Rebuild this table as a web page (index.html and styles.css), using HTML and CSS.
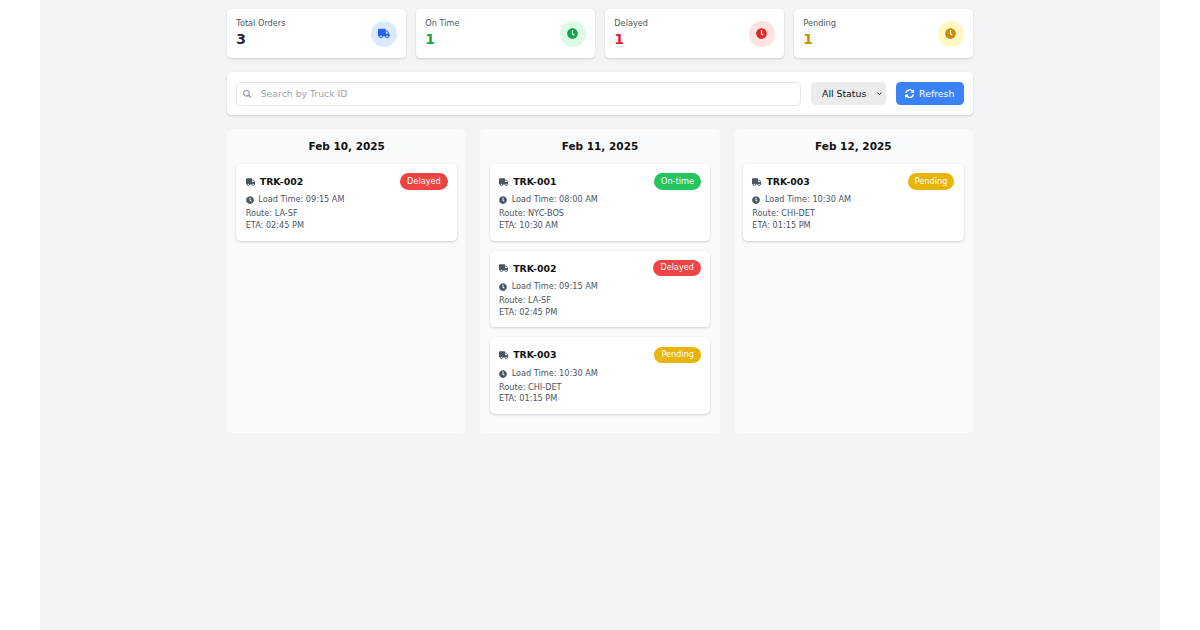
FILE: index.html
```html
<!DOCTYPE html>
<html lang="en">
<head>
<meta charset="utf-8">
<title>Truck Schedule</title>
<link rel="stylesheet" href="styles.css">
</head>
<body>
<div class="page">
  <div class="container">
    <div class="stats">
      <div class="stat">
        <div>
          <div class="stat-label">Total Orders</div>
          <div class="stat-value v-gray">3</div>
        </div>
        <div class="stat-icon i-blue">
          <svg viewBox="0 0 640 512"><path d="M624 352h-16V243.9c0-12.7-5.1-24.9-14.1-33.9L494 110.1c-9-9-21.2-14.1-33.9-14.1H416V48c0-26.5-21.5-48-48-48H48C21.5 0 0 21.5 0 48v320c0 26.5 21.5 48 48 48h16c0 53 43 96 96 96s96-43 96-96h128c0 53 43 96 96 96s96-43 96-96h48c8.8 0 16-7.2 16-16v-32c0-8.8-7.2-16-16-16zM160 464c-26.5 0-48-21.5-48-48s21.5-48 48-48 48 21.5 48 48-21.5 48-48 48zm320 0c-26.5 0-48-21.5-48-48s21.5-48 48-48 48 21.5 48 48-21.5 48-48 48zm80-208H416V144h44.1l99.9 99.9V256z"/></svg>
        </div>
      </div>
      <div class="stat">
        <div>
          <div class="stat-label">On Time</div>
          <div class="stat-value v-green">1</div>
        </div>
        <div class="stat-icon i-green">
          <svg viewBox="0 0 512 512"><path d="M256,8C119,8,8,119,8,256S119,504,256,504,504,393,504,256,393,8,256,8Zm92.49,313h0l-20,25a16,16,0,0,1-22.49,2.5h0l-67-49.72a40,40,0,0,1-15-31.230V112a16,16,0,0,1,16-16h32a16,16,0,0,1,16,16V256l58,42.5A16,16,0,0,1,348.49,321Z"/></svg>
        </div>
      </div>
      <div class="stat">
        <div>
          <div class="stat-label">Delayed</div>
          <div class="stat-value v-red">1</div>
        </div>
        <div class="stat-icon i-red">
          <svg viewBox="0 0 512 512"><path d="M256,8C119,8,8,119,8,256S119,504,256,504,504,393,504,256,393,8,256,8Zm92.49,313h0l-20,25a16,16,0,0,1-22.49,2.5h0l-67-49.72a40,40,0,0,1-15-31.230V112a16,16,0,0,1,16-16h32a16,16,0,0,1,16,16V256l58,42.5A16,16,0,0,1,348.49,321Z"/></svg>
        </div>
      </div>
      <div class="stat">
        <div>
          <div class="stat-label">Pending</div>
          <div class="stat-value v-yellow">1</div>
        </div>
        <div class="stat-icon i-yellow">
          <svg viewBox="0 0 512 512"><path d="M256,8C119,8,8,119,8,256S119,504,256,504,504,393,504,256,393,8,256,8Zm92.49,313h0l-20,25a16,16,0,0,1-22.49,2.5h0l-67-49.72a40,40,0,0,1-15-31.230V112a16,16,0,0,1,16-16h32a16,16,0,0,1,16,16V256l58,42.5A16,16,0,0,1,348.49,321Z"/></svg>
        </div>
      </div>
    </div>

    <div class="toolbar">
      <div class="search">
        <svg class="search-icon" viewBox="0 0 512 512"><path d="M505 442.7L405.3 343c-4.5-4.5-10.6-7-17-7H372c27.6-35.3 44-79.7 44-128C416 93.1 322.9 0 208 0S0 93.1 0 208s93.1 208 208 208c48.3 0 92.7-16.4 128-44v16.3c0 6.4 2.5 12.5 7 17l99.7 99.7c9.4 9.4 24.6 9.4 33.9 0l28.3-28.3c9.4-9.4 9.4-24.6.1-34zM208 336c-70.7 0-128-57.2-128-128 0-70.7 57.2-128 128-128 70.7 0 128 57.2 128 128 0 70.7-57.2 128-128 128z"/></svg>
        <input class="search-input" type="text" placeholder="Search by Truck ID">
      </div>
      <div class="select-wrap">
        <select class="status-select">
          <option>All Status</option>
          <option>On-time</option>
          <option>Delayed</option>
          <option>Pending</option>
        </select>
        <svg class="chevron" viewBox="0 0 10 6"><path d="M1.2 1.2 L5 4.8 L8.8 1.2"/></svg>
      </div>
      <button class="refresh-btn">
        <svg viewBox="0 0 512 512"><path d="M370.72 133.28C339.458 104.008 298.888 87.962 255.848 88c-77.458.068-144.328 53.178-162.791 126.85-1.344 5.363-6.122 9.150-11.651 9.150H24.103c-7.498 0-13.194-6.807-11.807-14.176C33.933 94.924 134.813 8 256 8c66.448 0 126.791 26.136 171.315 68.685L463.030 40.970C478.149 25.851 504 36.559 504 57.941V192c0 13.255-10.745 24-24 24H345.941c-21.382 0-32.090-25.851-16.971-40.971l41.750-41.749zM32 296h134.059c21.382 0 32.090 25.851 16.971 40.971l-41.750 41.750c31.262 29.273 71.835 45.319 114.876 45.280 77.418-.070 144.315-53.144 162.787-126.849 1.344-5.363 6.122-9.150 11.651-9.150h57.304c7.498 0 13.194 6.807 11.807 14.176C478.067 417.076 377.187 504 256 504c-66.448 0-126.791-26.136-171.315-68.685L48.970 471.030C33.851 486.149 8 475.441 8 454.059V320c0-13.255 10.745-24 24-24z"/></svg>
        <span>Refresh</span>
      </button>
    </div>

    <div class="columns">
      <div class="column">
        <h2 class="column-title">Feb 10, 2025</h2>
        <div class="card">
          <div class="card-head">
            <div class="truck-id">
              <svg class="truck" viewBox="0 0 640 512"><path d="M624 352h-16V243.9c0-12.7-5.1-24.9-14.1-33.9L494 110.1c-9-9-21.2-14.1-33.9-14.1H416V48c0-26.5-21.5-48-48-48H48C21.5 0 0 21.5 0 48v320c0 26.5 21.5 48 48 48h16c0 53 43 96 96 96s96-43 96-96h128c0 53 43 96 96 96s96-43 96-96h48c8.8 0 16-7.2 16-16v-32c0-8.8-7.2-16-16-16zM160 464c-26.5 0-48-21.5-48-48s21.5-48 48-48 48 21.5 48 48-21.5 48-48 48zm320 0c-26.5 0-48-21.5-48-48s21.5-48 48-48 48 21.5 48 48-21.5 48-48 48zm80-208H416V144h44.1l99.9 99.9V256z"/></svg>
              <span>TRK-002</span>
            </div>
            <span class="badge b-red">Delayed</span>
          </div>
          <div class="load">
            <svg class="clock" viewBox="0 0 512 512"><path d="M256,8C119,8,8,119,8,256S119,504,256,504,504,393,504,256,393,8,256,8Zm92.49,313h0l-20,25a16,16,0,0,1-22.49,2.5h0l-67-49.72a40,40,0,0,1-15-31.230V112a16,16,0,0,1,16-16h32a16,16,0,0,1,16,16V256l58,42.5A16,16,0,0,1,348.49,321Z"/></svg>
            <span>Load Time: 09:15 AM</span>
          </div>
          <div class="meta">Route: LA-SF</div>
          <div class="meta">ETA: 02:45 PM</div>
        </div>
      </div>

      <div class="column">
        <h2 class="column-title">Feb 11, 2025</h2>
        <div class="card">
          <div class="card-head">
            <div class="truck-id">
              <svg class="truck" viewBox="0 0 640 512"><path d="M624 352h-16V243.9c0-12.7-5.1-24.9-14.1-33.9L494 110.1c-9-9-21.2-14.1-33.9-14.1H416V48c0-26.5-21.5-48-48-48H48C21.5 0 0 21.5 0 48v320c0 26.5 21.5 48 48 48h16c0 53 43 96 96 96s96-43 96-96h128c0 53 43 96 96 96s96-43 96-96h48c8.8 0 16-7.2 16-16v-32c0-8.8-7.2-16-16-16zM160 464c-26.5 0-48-21.5-48-48s21.5-48 48-48 48 21.5 48 48-21.5 48-48 48zm320 0c-26.5 0-48-21.5-48-48s21.5-48 48-48 48 21.5 48 48-21.5 48-48 48zm80-208H416V144h44.1l99.9 99.9V256z"/></svg>
              <span>TRK-001</span>
            </div>
            <span class="badge b-green">On-time</span>
          </div>
          <div class="load">
            <svg class="clock" viewBox="0 0 512 512"><path d="M256,8C119,8,8,119,8,256S119,504,256,504,504,393,504,256,393,8,256,8Zm92.49,313h0l-20,25a16,16,0,0,1-22.49,2.5h0l-67-49.72a40,40,0,0,1-15-31.230V112a16,16,0,0,1,16-16h32a16,16,0,0,1,16,16V256l58,42.5A16,16,0,0,1,348.49,321Z"/></svg>
            <span>Load Time: 08:00 AM</span>
          </div>
          <div class="meta">Route: NYC-BOS</div>
          <div class="meta">ETA: 10:30 AM</div>
        </div>
        <div class="card">
          <div class="card-head">
            <div class="truck-id">
              <svg class="truck" viewBox="0 0 640 512"><path d="M624 352h-16V243.9c0-12.7-5.1-24.9-14.1-33.9L494 110.1c-9-9-21.2-14.1-33.9-14.1H416V48c0-26.5-21.5-48-48-48H48C21.5 0 0 21.5 0 48v320c0 26.5 21.5 48 48 48h16c0 53 43 96 96 96s96-43 96-96h128c0 53 43 96 96 96s96-43 96-96h48c8.8 0 16-7.2 16-16v-32c0-8.8-7.2-16-16-16zM160 464c-26.5 0-48-21.5-48-48s21.5-48 48-48 48 21.5 48 48-21.5 48-48 48zm320 0c-26.5 0-48-21.5-48-48s21.5-48 48-48 48 21.5 48 48-21.5 48-48 48zm80-208H416V144h44.1l99.9 99.9V256z"/></svg>
              <span>TRK-002</span>
            </div>
            <span class="badge b-red">Delayed</span>
          </div>
          <div class="load">
            <svg class="clock" viewBox="0 0 512 512"><path d="M256,8C119,8,8,119,8,256S119,504,256,504,504,393,504,256,393,8,256,8Zm92.49,313h0l-20,25a16,16,0,0,1-22.49,2.5h0l-67-49.72a40,40,0,0,1-15-31.230V112a16,16,0,0,1,16-16h32a16,16,0,0,1,16,16V256l58,42.5A16,16,0,0,1,348.49,321Z"/></svg>
            <span>Load Time: 09:15 AM</span>
          </div>
          <div class="meta">Route: LA-SF</div>
          <div class="meta">ETA: 02:45 PM</div>
        </div>
        <div class="card">
          <div class="card-head">
            <div class="truck-id">
              <svg class="truck" viewBox="0 0 640 512"><path d="M624 352h-16V243.9c0-12.7-5.1-24.9-14.1-33.9L494 110.1c-9-9-21.2-14.1-33.9-14.1H416V48c0-26.5-21.5-48-48-48H48C21.5 0 0 21.5 0 48v320c0 26.5 21.5 48 48 48h16c0 53 43 96 96 96s96-43 96-96h128c0 53 43 96 96 96s96-43 96-96h48c8.8 0 16-7.2 16-16v-32c0-8.8-7.2-16-16-16zM160 464c-26.5 0-48-21.5-48-48s21.5-48 48-48 48 21.5 48 48-21.5 48-48 48zm320 0c-26.5 0-48-21.5-48-48s21.5-48 48-48 48 21.5 48 48-21.5 48-48 48zm80-208H416V144h44.1l99.9 99.9V256z"/></svg>
              <span>TRK-003</span>
            </div>
            <span class="badge b-yellow">Pending</span>
          </div>
          <div class="load">
            <svg class="clock" viewBox="0 0 512 512"><path d="M256,8C119,8,8,119,8,256S119,504,256,504,504,393,504,256,393,8,256,8Zm92.49,313h0l-20,25a16,16,0,0,1-22.49,2.5h0l-67-49.72a40,40,0,0,1-15-31.230V112a16,16,0,0,1,16-16h32a16,16,0,0,1,16,16V256l58,42.5A16,16,0,0,1,348.49,321Z"/></svg>
            <span>Load Time: 10:30 AM</span>
          </div>
          <div class="meta">Route: CHI-DET</div>
          <div class="meta">ETA: 01:15 PM</div>
        </div>
      </div>

      <div class="column">
        <h2 class="column-title">Feb 12, 2025</h2>
        <div class="card">
          <div class="card-head">
            <div class="truck-id">
              <svg class="truck" viewBox="0 0 640 512"><path d="M624 352h-16V243.9c0-12.7-5.1-24.9-14.1-33.9L494 110.1c-9-9-21.2-14.1-33.9-14.1H416V48c0-26.5-21.5-48-48-48H48C21.5 0 0 21.5 0 48v320c0 26.5 21.5 48 48 48h16c0 53 43 96 96 96s96-43 96-96h128c0 53 43 96 96 96s96-43 96-96h48c8.8 0 16-7.2 16-16v-32c0-8.8-7.2-16-16-16zM160 464c-26.5 0-48-21.5-48-48s21.5-48 48-48 48 21.5 48 48-21.5 48-48 48zm320 0c-26.5 0-48-21.5-48-48s21.5-48 48-48 48 21.5 48 48-21.5 48-48 48zm80-208H416V144h44.1l99.9 99.9V256z"/></svg>
              <span>TRK-003</span>
            </div>
            <span class="badge b-yellow">Pending</span>
          </div>
          <div class="load">
            <svg class="clock" viewBox="0 0 512 512"><path d="M256,8C119,8,8,119,8,256S119,504,256,504,504,393,504,256,393,8,256,8Zm92.49,313h0l-20,25a16,16,0,0,1-22.49,2.5h0l-67-49.72a40,40,0,0,1-15-31.230V112a16,16,0,0,1,16-16h32a16,16,0,0,1,16,16V256l58,42.5A16,16,0,0,1,348.49,321Z"/></svg>
            <span>Load Time: 10:30 AM</span>
          </div>
          <div class="meta">Route: CHI-DET</div>
          <div class="meta">ETA: 01:15 PM</div>
        </div>
      </div>
    </div>
  </div>
</div>
</body>
</html>
```

FILE: styles.css
```css
* { box-sizing: border-box; }

html, body {
  margin: 0;
  padding: 0;
  background: #ffffff;
  font-family: "DejaVu Sans", sans-serif;
}

.page {
  margin: 0 40px;
  min-height: 630px;
  background: #f3f4f6;
  padding: 9.33px 0;
}

.container {
  width: 746px;
  margin: 0 auto;
}

/* Stats */
.stats {
  display: grid;
  grid-template-columns: repeat(4, 1fr);
  gap: 10px;
  margin-bottom: 14.5px;
}

.stat {
  background: #fff;
  border-radius: 4.67px;
  box-shadow: 0 1px 3px rgba(0,0,0,0.1), 0 1px 2px rgba(0,0,0,0.06);
  padding: 9px 9.33px;
  display: flex;
  justify-content: space-between;
  align-items: center;
}

.stat-label {
  font-size: 8.17px;
  line-height: 11.67px;
  color: #4b5563;
}

.stat-value {
  font-size: 14px;
  line-height: 18.67px;
  font-weight: bold;
}

.v-gray { color: #1f2937; }
.v-green { color: #16a34a; }
.v-red { color: #dc2626; }
.v-yellow { color: #ca8a04; }

.stat-icon {
  width: 26px;
  height: 26px;
  border-radius: 50%;
  display: flex;
  align-items: center;
  justify-content: center;
}

.stat-icon svg {
  width: 11px;
  height: 11px;
  fill: currentColor;
}

.i-blue { background: #dbeafe; color: #2563eb; }
.i-blue svg { width: 12px; }
.i-green { background: #dcfce7; color: #16a34a; }
.i-red { background: #fee2e2; color: #dc2626; }
.i-yellow { background: #fef9c3; color: #ca8a04; }

/* Toolbar */
.toolbar {
  background: #fff;
  border-radius: 4.67px;
  box-shadow: 0 1px 3px rgba(0,0,0,0.1), 0 1px 2px rgba(0,0,0,0.06);
  padding: 9.33px;
  display: flex;
  align-items: center;
  gap: 9.8px;
  margin-bottom: 14px;
}

.search {
  position: relative;
  flex: 1;
}

.search-icon {
  position: absolute;
  left: 7px;
  top: 50%;
  transform: translateY(-50%);
  width: 8.5px;
  height: 8.5px;
  fill: #9ca3af;
}

.search-input {
  display: block;
  width: 100%;
  height: 24px;
  border: 1px solid #e5e7eb;
  border-radius: 4.67px;
  padding: 0 8px 0 23.3px;
  font-family: "DejaVu Sans", sans-serif;
  font-size: 9.33px;
  color: #111827;
  outline: none;
  background: #fff;
}

.search-input::placeholder { color: #9ca3af; }

.select-wrap {
  position: relative;
}

.status-select {
  display: block;
  -webkit-appearance: none;
  appearance: none;
  height: 23.5px;
  width: 75px;
  border: none;
  border-radius: 4.67px;
  background-color: #ececec;
  font-family: "DejaVu Sans", sans-serif;
  font-size: 9.33px;
  color: #111;
  padding: 0 14px 0 11px;
}

.chevron {
  position: absolute;
  right: 4.5px;
  top: 50%;
  width: 5px;
  height: 3.4px;
  margin-top: -1.5px;
  fill: none;
  stroke: #222;
  stroke-width: 2;
  pointer-events: none;
}

.refresh-btn {
  height: 23.5px;
  border: none;
  border-radius: 4.67px;
  background: #3b82f6;
  color: #fff;
  font-family: "DejaVu Sans", sans-serif;
  font-size: 9.33px;
  padding: 0 9.33px;
  display: flex;
  align-items: center;
  gap: 4.67px;
}

.refresh-btn svg {
  width: 9.33px;
  height: 9.33px;
  fill: #fff;
}

/* Columns */
.columns {
  display: grid;
  grid-template-columns: repeat(3, 1fr);
  gap: 14px;
}

.column {
  background: #f9fafb;
  border-radius: 4.67px;
  padding: 9.33px 9.33px 9px;
}

.column-title {
  margin: 0 0 9.6px;
  text-align: center;
  font-size: 10.5px;
  line-height: 16.33px;
  font-weight: bold;
  color: #111;
}

.card {
  background: #fff;
  border-radius: 4.67px;
  box-shadow: 0 1px 3px rgba(0,0,0,0.12), 0 1px 2px rgba(0,0,0,0.06);
  padding: 9.33px 9.33px 9px;
  margin-bottom: 10px;
}

.card-head {
  display: flex;
  justify-content: space-between;
  align-items: center;
  margin-bottom: 4.67px;
}

.truck-id {
  display: flex;
  align-items: center;
  gap: 4.67px;
  font-size: 9.33px;
  font-weight: bold;
  color: #111;
}

.truck {
  width: 9.5px;
  height: 8px;
  fill: #4b5563;
}

.badge {
  font-size: 8.17px;
  line-height: 11.67px;
  padding: 2.33px 7px;
  border-radius: 999px;
  color: #fff;
}

.b-red { background: #ef4444; }
.b-green { background: #22c55e; }
.b-yellow { background: #eab308; }

.load {
  display: flex;
  align-items: center;
  gap: 4.67px;
  font-size: 8.17px;
  line-height: 11.67px;
  color: #4b5563;
  margin-bottom: 2.33px;
}

.clock {
  width: 8px;
  height: 8px;
  fill: #4b5563;
}

.meta {
  font-size: 8.17px;
  line-height: 11.67px;
  color: #4b5563;
}
```
